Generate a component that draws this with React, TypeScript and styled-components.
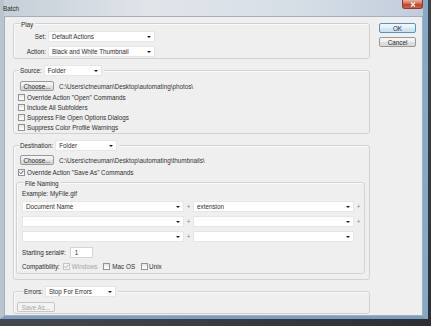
import styled, { createGlobalStyle } from "styled-components";

const GlobalStyle = createGlobalStyle`
  html, body { margin: 0; padding: 0; }
  body {
    width: 431px;
    height: 326px;
    overflow: hidden;
    background: #3f4246;
    font-family: "Liberation Sans", Arial, sans-serif;
    font-size: 6.3px;
    color: #2e2e2e;
  }
`;

const Screen = styled.div`
  width: 431px;
  height: 326px;
  background: linear-gradient(135deg, #55595e 0%, #3a3c40 70%, #2c2e31 100%);
`;

const Window = styled.div`
  box-sizing: border-box;
  width: 428px;
  height: 319px;
  display: flex;
  flex-direction: column;
  border-left: 4px solid #b9c4cf;
  border-right: 5px solid #86a9c8;
  border-bottom: 3px solid #7c9fc0;
  background: linear-gradient(90deg, #c6cfd8 0%, #e0e5ea 35%, #d6dee6 70%, #bfcddb 100%);
`;

const TitleBar = styled.div`
  height: 16px;
  display: flex;
  align-items: flex-start;
  justify-content: space-between;
`;

const TitleText = styled.span`
  margin-top: 5px;
  margin-left: -1px;
  line-height: 8px;
  color: #2a2a2a;
`;

const CloseButton = styled.div`
  box-sizing: border-box;
  width: 21px;
  height: 9px;
  display: flex;
  align-items: center;
  justify-content: center;
  border: 1px solid #8a3a2e;
  border-top: none;
  border-radius: 0 0 3px 3px;
  background: linear-gradient(#eab0a0 0%, #d66a54 45%, #c4442c 55%, #d06048 100%);
`;

const Client = styled.div`
  flex: 1;
  display: flex;
  align-items: flex-start;
  gap: 9px;
  padding: 6px 6px 0 8px;
  border: 1px solid #a3afbb;
  background: #efefef;
`;

const MainColumn = styled.div`
  width: 357px;
  display: flex;
  flex-direction: column;
`;

const ButtonColumn = styled.div`
  width: 37px;
  display: flex;
  flex-direction: column;
  gap: 4px;
`;

const GroupBox = styled.div<{ $top?: number; $pad?: string }>`
  margin-top: ${(p) => p.$top ?? 0}px;
  padding: ${(p) => p.$pad ?? "0"};
  display: flex;
  flex-direction: column;
  border: 1px solid #d2d2d2;
  border-radius: 3px;
  box-shadow: inset 1px 1px 0 #fafafa;
`;

const Caption = styled.div<{ $h: number; $left: number }>`
  width: fit-content;
  height: ${(p) => p.$h}px;
  margin-top: -${(p) => Math.ceil(p.$h / 2)}px;
  margin-left: ${(p) => p.$left}px;
  padding: 0 2px 0 1px;
  display: flex;
  align-items: center;
  gap: 2px;
  background: #efefef;
  white-space: nowrap;
`;

const FieldGrid = styled.div`
  margin-top: 2px;
  display: grid;
  grid-template-columns: 32px 107px;
  column-gap: 2px;
  row-gap: 4px;
  align-items: center;
`;

const FieldLabel = styled.span`
  text-align: right;
`;

const Select = styled.div<{ $w?: number }>`
  box-sizing: border-box;
  width: ${(p) => (p.$w ? `${p.$w}px` : "auto")};
  height: 11px;
  padding: 0 3px 0 3px;
  display: flex;
  align-items: center;
  justify-content: space-between;
  background: #ffffff;
  border: 1px solid #e6e6e6;
  white-space: nowrap;
`;

const Arrow = styled.span`
  width: 0;
  height: 0;
  border-left: 2px solid transparent;
  border-right: 2px solid transparent;
  border-top: 2px solid #1a1a1a;
`;

const Row = styled.div<{ $top?: number; $left?: number; $gap?: number; $h?: number }>`
  height: ${(p) => p.$h ?? 10}px;
  margin-top: ${(p) => p.$top ?? 0}px;
  margin-left: ${(p) => p.$left ?? 0}px;
  display: flex;
  align-items: center;
  gap: ${(p) => p.$gap ?? 2}px;
  white-space: nowrap;
`;

const PushButton = styled.div<{ $w: number; $default?: boolean; $disabled?: boolean }>`
  box-sizing: border-box;
  width: ${(p) => p.$w}px;
  height: 10px;
  display: flex;
  align-items: center;
  justify-content: center;
  border: 1px solid ${(p) => (p.$default ? "#5a93c0" : p.$disabled ? "#c6c6c6" : "#989898")};
  border-radius: 2px;
  color: ${(p) => (p.$disabled ? "#a6a6a6" : "#2a2a2a")};
  background: ${(p) =>
    p.$disabled
      ? "#f3f3f3"
      : p.$default
      ? "linear-gradient(#f0f7fc 0%, #e3f0f9 50%, #d4e7f4 51%, #cbe1f1 100%)"
      : "linear-gradient(#f7f7f7 0%, #ededed 50%, #e0e0e0 51%, #d7d7d7 100%)"};
  white-space: nowrap;
`;

const PathText = styled.span`
  color: #333333;
`;

const Box = styled.div<{ $disabled?: boolean }>`
  box-sizing: border-box;
  width: 7px;
  height: 7px;
  display: flex;
  border: 1px solid ${(p) => (p.$disabled ? "#c6c6c6" : "#939393")};
  background: ${(p) => (p.$disabled ? "#f2f2f2" : "linear-gradient(#e6e6e6, #ffffff)")};
`;

const Muted = styled.span`
  color: #a4a4a4;
`;

const NameGrid = styled.div`
  margin-top: 3px;
  display: grid;
  grid-template-columns: 162px 9px 161px 9px;
  row-gap: 4px;
  align-items: center;
`;

const Plus = styled.span`
  text-align: center;
  color: #858585;
`;

const NumberInput = styled.div`
  box-sizing: border-box;
  width: 23px;
  height: 11px;
  padding-left: 4px;
  display: flex;
  align-items: center;
  background: #ffffff;
  border: 1px solid #d4d4d4;
`;

function Check({ checked, disabled }: { checked?: boolean; disabled?: boolean }) {
  return (
    <Box $disabled={disabled}>
      {checked && (
        <svg width="5" height="5" viewBox="0 0 5 5">
          <path d="M0.6 2.4 L1.9 3.8 L4.4 0.8" fill="none" stroke={disabled ? "#b4b4b4" : "#40629a"} strokeWidth="1" />
        </svg>
      )}
    </Box>
  );
}

function Dropdown({ value, w }: { value: string; w?: number }) {
  return (
    <Select $w={w}>
      <span>{value}</span>
      <Arrow />
    </Select>
  );
}

function CheckItem({ label, checked, left }: { label: string; checked?: boolean; left: number }) {
  return (
    <Row $left={left}>
      <Check checked={checked} />
      <span>{label}</span>
    </Row>
  );
}

const namingRows = [
  ["Document Name", "extension", true],
  ["", "", true],
  ["", "", false],
] as const;

export default function App() {
  return (
    <Screen>
      <GlobalStyle />
      <Window>
        <TitleBar>
          <TitleText>Batch</TitleText>
          <CloseButton>
            <svg width="6" height="5" viewBox="0 0 6 5">
              <path d="M1 0.5 L5 4.5 M5 0.5 L1 4.5" stroke="#ffffff" strokeWidth="1.2" />
            </svg>
          </CloseButton>
        </TitleBar>
        <Client>
          <MainColumn>
            <GroupBox $pad="0 0 1px 0">
              <Caption $h={10} $left={6}>Play</Caption>
              <FieldGrid>
                <FieldLabel>Set:</FieldLabel>
                <Dropdown value="Default Actions" />
                <FieldLabel>Action:</FieldLabel>
                <Dropdown value="Black and White Thumbnail" />
              </FieldGrid>
            </GroupBox>

            <GroupBox $top={11} $pad="0 0 1px 4px">
              <Caption $h={11} $left={1}>
                Source:
                <Dropdown value="Folder" w={58} />
              </Caption>
              <Row $top={5} $left={2} $gap={5}>
                <PushButton $w={34}>Choose...</PushButton>
                <PathText>C:\Users\ctneuman\Desktop\automating\photos\</PathText>
              </Row>
              <Row $top={1}>
                <Check />
                <span>Override Action "Open" Commands</span>
              </Row>
              <CheckItem left={0} label="Include All Subfolders" />
              <CheckItem left={0} label="Suppress File Open Options Dialogs" />
              <CheckItem left={0} label="Suppress Color Profile Warnings" />
            </GroupBox>

            <GroupBox $top={11} $pad="0 4px 5px 2px">
              <Caption $h={11} $left={3}>
                Destination:
                <Dropdown value="Folder" w={62} />
              </Caption>
              <Row $top={4} $left={4} $gap={5}>
                <PushButton $w={34}>Choose...</PushButton>
                <PathText>C:\Users\ctneuman\Desktop\automating\thumbnails\</PathText>
              </Row>
              <Row $top={2} $left={2}>
                <Check checked />
                <span>Override Action "Save As" Commands</span>
              </Row>

              <GroupBox $top={5} $pad="0 0 2px 5px">
                <Caption $h={10} $left={2}>File Naming</Caption>
                <Row>Example: MyFile.gif</Row>
                <NameGrid>
                  {namingRows.map(([a, b, plus], i) => [
                    <Dropdown key={`a${i}`} value={a} />,
                    <Plus key={`p${i}`}>+</Plus>,
                    <Dropdown key={`b${i}`} value={b} />,
                    <Plus key={`q${i}`}>{plus ? "+" : ""}</Plus>,
                  ])}
                </NameGrid>
                <Row $top={5} $h={11} $gap={4}>
                  <span>Starting serial#:</span>
                  <NumberInput>1</NumberInput>
                </Row>
                <Row $top={3} $gap={3}>
                  <span>Compatibility:</span>
                  <Row $gap={2}>
                    <Check checked disabled />
                    <Muted>Windows</Muted>
                  </Row>
                  <Row $left={3} $gap={2}>
                    <Check />
                    <span>Mac OS</span>
                  </Row>
                  <Row $left={3} $gap={1}>
                    <Check />
                    <span>Unix</span>
                  </Row>
                </Row>
              </GroupBox>
            </GroupBox>

            <GroupBox $top={11} $pad="0 0 1px 3px">
              <Caption $h={11} $left={6}>
                Errors:
                <Dropdown value="Stop For Errors" w={71} />
              </Caption>
              <Row $top={5}>
                <PushButton $w={38} $disabled>Save As...</PushButton>
              </Row>
            </GroupBox>
          </MainColumn>

          <ButtonColumn>
            <PushButton $w={37} $default>OK</PushButton>
            <PushButton $w={37}>Cancel</PushButton>
          </ButtonColumn>
        </Client>
      </Window>
    </Screen>
  );
}
